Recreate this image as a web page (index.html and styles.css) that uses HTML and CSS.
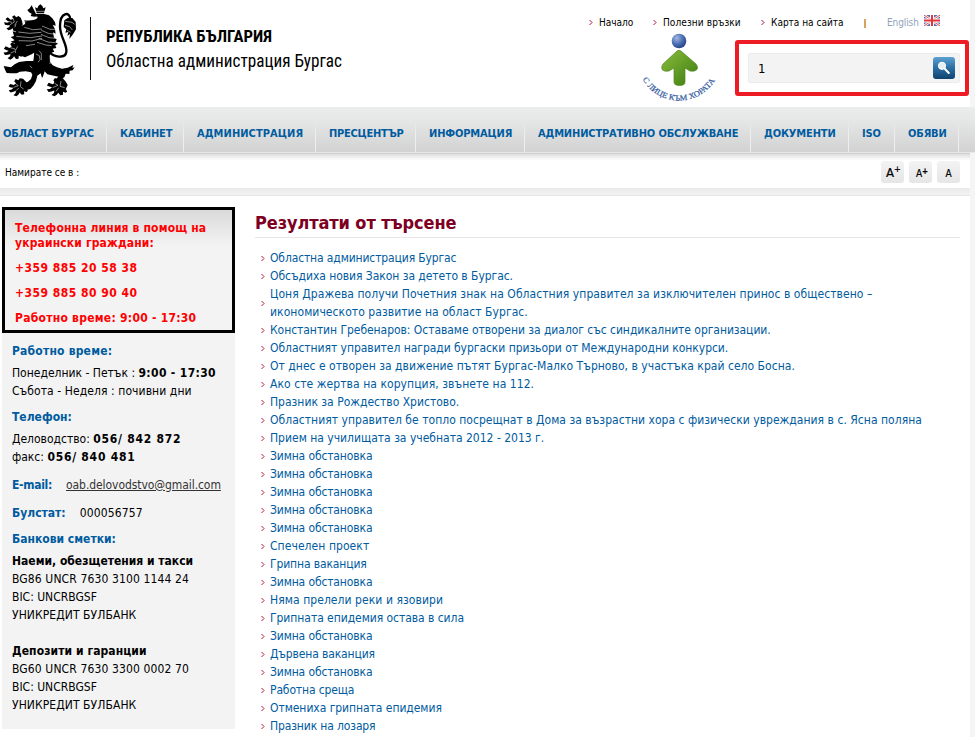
FILE: index.html
```html
<!DOCTYPE html>
<html>
<head>
<meta charset="utf-8">
<title>Областна администрация Бургас</title>
<link rel="stylesheet" href="styles.css">
</head>
<body>
<div class="page">
  <header class="header">
    <svg class="lion" viewBox="0 0 270 315" aria-hidden="true">
      <defs>
        <path id="paw" d="M28 0L24-10 17-21 8-25 2-20-5-25-11-19-7-12-14-8-25-14-31-7-25-3-17 0-24 4-33 4-29 12-20 12-12 10-14 17-22 22-14 27-6 23-2 18 3 26 11 26 12 17 19 21 24 18 21 11z"/>
      </defs>
      <!-- crown -->
      <path d="M105 22l7 3 3-7 6-5 6 5 3 7 7-3-5 18h-22z"/>
      <!-- head, mane and chest -->
      <path d="M108 42h25l14 4 10 9 8 12 2 10-9-2 7 12 2 14-8-4 3 16 8 5-4 9 8 4-8 5 3 8-11 2 5 9-9 3-42-4-14-9-21 0-15-5-21-2 9-6-18-7 12-4-12-10 10-3-4-14 10 3-1-12 10-7 9-1 8-4 6-11 20-2 9-3 5-7-8 1-14-3 3-7-8-4-5-7 7-5 6-9z"/>
      <!-- torso and hind legs -->
      <path d="M103 135l56 0-6 24-4 8 1 18 8 11 13 6 15 4 17-3 17-8-3 9 7-2-6 9-9 1-1 10-11-1-4 11-9 5 9 14-3 10-24-2-4-11 3-8 10-10-20-4-13-3-8-9-5 15-3 5-4-14-10 7-4 16-8 14-9 10-14 4-14-6-3-10 14-6 10-4 9-8 4-13-4-7-16-3-17 1-10 5-16 0-14-1-5-10-4-11 22 4 11-9 13-7 23-3 20 0 2-16z"/>
      <!-- forelegs -->
      <path d="M52 138l26 4 27-6 10 14-20 13-20 9-18-7zM44 69l15 18 17-3 4 14-21 2-12-14z"/>
      <use href="#paw" transform="translate(43 69) rotate(12) scale(.92)"/>
      <use href="#paw" transform="translate(43 151) rotate(-4)"/>
      <use href="#paw" transform="translate(57 260) rotate(-12) scale(.98)"/>
      <use href="#paw" transform="translate(174 259) rotate(-8) scale(1.05)"/>
      <!-- tail -->
      <path d="M150 157c10 14 46 20 49-1 3-24-19-44-19-78 0-42 30-45 31-20" fill="none" stroke="#000" stroke-width="7"/>
      <path d="M203 54h14l10 12 1 22-9 15-11 14 2-15-8 6 3-12-9 2 3-10-8-7 2-20z"/>
      <path class="cut" d="M106 34h30M102 52l8-3M73 82l25 7 28-2M55 96l34 4 35-3M49 109l42 4 35-5M56 122l40 1 30-8M126 78l24 10 15 0M124 91l21 9 22 3M123 103l24 10 21 2M116 115l28 11 22 2M111 127l26 8 18 2M78 137l27-4M108 162l10 5 2 12-6 8M117 152l7 8 0 20M152 176l-2 16M39 54l4 12-13 8M52 63l-8 13M24 64l12 3M44 82l4-9M31 143l14 4 2 12M32 159l12-5M53 139l-6 11M45 250l10 7-14 5M63 244l-2 16 10 7M48 272l8-8M164 250l10 6-16 7M183 243l-3 16 14 4M168 274l8-11M191 199l-4 8M90 197l6 8M195 76l14 4 8 10M196 64l20 3 8 6M201 91l11 6"/>
      <path d="M100 70q-15-7-26-8M75 62q1 15 22 14" fill="none" stroke="#000" stroke-width="2.500"/>
    </svg>
    <div class="divider"></div>
    <svg class="brand" viewBox="0 0 240 60" lang="bg">
      <text class="brand-top" x="0" y="22" textLength="166" lengthAdjust="spacingAndGlyphs">РЕПУБЛИКА БЪЛГАРИЯ</text>
      <text class="brand-sub" x="0" y="47" textLength="236" lengthAdjust="spacingAndGlyphs">Областна администрация Бургас</text>
    </svg>
    <svg class="motto" viewBox="0 0 86 76">
      <defs>
        <linearGradient id="leaf" x1="0" y1="0" x2="1" y2="1"><stop offset="0" stop-color="#8abb3c"/><stop offset=".5" stop-color="#639d26"/><stop offset="1" stop-color="#3c7810"/></linearGradient>
        <radialGradient id="ball" cx=".35" cy=".3" r=".75"><stop offset="0" stop-color="#a0b9e2"/><stop offset=".55" stop-color="#4d6fb3"/><stop offset="1" stop-color="#243f86"/></radialGradient>
        <path id="arc" d="M6 48.500A42 42 0 0 0 80 48.500"/>
      </defs>
      <circle cx="43" cy="11" r="7.300" fill="url(#ball)"/>
      <path d="M41 21q2-1.500 4 0L60 34q2.500 3 1 5.500-2 2.500-7 1.500l-5-3v14q0 3.500-5.500 3.500T38 52V38l-5 3q-5 1-7-1.500-1-2.500 1-5.500z" fill="url(#leaf)" stroke="#4f8720" stroke-width=".7" stroke-linejoin="round"/>
      <text class="motto-text"><textPath href="#arc" startOffset="1" textLength="87" lengthAdjust="spacingAndGlyphs">С ЛИЦЕ КЪМ ХОРАТА</textPath></text>
    </svg>
    <div class="tools">
      <nav class="links">
        <a class="home"><svg class="chev" viewBox="0 0 4 5"><path d="M.5 0L3 2.500.5 5"/></svg>Начало</a>
        <a class="useful"><svg class="chev" viewBox="0 0 4 5"><path d="M.5 0L3 2.500.5 5"/></svg>Полезни връзки</a>
        <a class="map"><svg class="chev" viewBox="0 0 4 5"><path d="M.5 0L3 2.500.5 5"/></svg>Карта на сайта</a>
        <span class="bar"></span>
        <a class="english">English</a>
        <svg class="flag" viewBox="0 0 16 11"><path fill="#5b6fae" d="M0 0h16v11H0z"/><path d="M0 0l16 11M16 0L0 11" stroke="#fff" stroke-width="2.400"/><path d="M0 0l16 11M16 0L0 11" stroke="#e0484e" stroke-width="1"/><path d="M8 0v11M0 5.500h16" stroke="#fff" stroke-width="4"/><path d="M8 0v11M0 5.500h16" stroke="#e5343b" stroke-width="2"/></svg>
      </nav>
      <div class="search-frame">
        <div class="search">
          <span>1</span>
          <svg class="search-btn" viewBox="0 0 22 22"><defs><linearGradient id="sb" x1="0" y1="0" x2="0" y2="1"><stop offset="0" stop-color="#5da1d2"/><stop offset=".5" stop-color="#2c6da3"/><stop offset="1" stop-color="#0d426f"/></linearGradient></defs><rect width="22" height="22" rx="3" fill="url(#sb)"/><circle cx="9" cy="8.800" r="3.600" fill="#e4eef6" stroke="#fff"/><path d="M11.500 11.500l4.300 4.500" stroke="#fff" stroke-width="2" stroke-linecap="round"/></svg>
        </div>
      </div>
    </div>
  </header>
  <nav class="menu">
    <a>ОБЛАСТ БУРГАС</a><a>КАБИНЕТ</a><a>АДМИНИСТРАЦИЯ</a><a>ПРЕСЦЕНТЪР</a><a>ИНФОРМАЦИЯ</a><a>АДМИНИСТРАТИВНО ОБСЛУЖВАНЕ</a><a>ДОКУМЕНТИ</a><a>ISO</a><a>ОБЯВИ</a>
  </nav>
  <div class="crumbs">
    <span>Намирате се в :</span>
    <div class="sizes">
      <b class="large">A<sup>+</sup></b><b class="mid">A<sup>+</sup></b><b class="small">A</b>
    </div>
  </div>
  <div class="strip"></div>
  <div class="columns">
    <aside class="side">
      <div class="hotline">
        <p>Телефонна линия в помощ на<br>украински граждани:</p>
        <p class="phone">+359 885 20 58 38</p>
        <p class="phone">+359 885 80 90 40</p>
        <p class="hours">Работно време: 9:00 - 17:30</p>
      </div>
      <div class="contacts">
        <h3 class="roomy">Работно време:</h3>
        <p>Понеделник - Петък : <b class="time">9:00 - 17:30</b><br><span class="rest">Събота - Неделя : почивни дни</span></p>
        <h3>Телефон:</h3>
        <p>Деловодство: <b class="num">056/ 842 872</b><br>факс: <b class="num">056/ 840 481</b></p>
        <div class="pair"><h3 class="mail">E-mail:</h3><a>oab.delovodstvo@gmail.com</a></div>
        <div class="pair tax"><h3>Булстат:</h3><span class="code">000056757</span></div>
        <h3>Банкови сметки:</h3>
        <p><b>Наеми, обезщетения и такси</b><br><span class="code">BG86 UNCR 7630 3100 1144 24</span><br>BIC: UNCRBGSF<br><span class="rest">УНИКРЕДИТ БУЛБАНК</span></p>
        <p class="second"><b class="rest">Депозити и гаранции</b><br><span class="code">BG60 UNCR 7630 3300 0002 70</span><br>BIC: UNCRBGSF<br><span class="rest">УНИКРЕДИТ БУЛБАНК</span></p>
      </div>
    </aside>
    <main class="main">
      <h1>Резултати от търсене</h1>
      <ul class="results">
        <li class="tight">Областна администрация Бургас</li>
        <li class="snug">Обсъдиха новия Закон за детето в Бургас.</li>
        <li class="wide">Цоня Дражева получи Почетния знак на Областния управител за изключителен принос в обществено –<br>икономическото развитие на област Бургас.</li>
        <li class="snug">Константин Гребенаров: Оставаме отворени за диалог със синдикалните организации.</li>
        <li class="snug">Областният управител награди бургаски призьори от Международни конкурси.</li>
        <li class="loose">От днес е отворен за движение пътят Бургас-Малко Търново, в участъка край село Босна.</li>
        <li class="wide">Ако сте жертва на корупция, звънете на 112.</li>
        <li>Празник за Рождество Христово.</li>
        <li class="loose">Областният управител бе топло посрещнат в Дома за възрастни хора с физически увреждания в с. Ясна поляна</li>
        <li>Прием на училищата за учебната 2012 - 2013 г.</li>
        <li class="tight">Зимна обстановка</li>
        <li class="tight">Зимна обстановка</li>
        <li class="tight">Зимна обстановка</li>
        <li class="tight">Зимна обстановка</li>
        <li class="tight">Зимна обстановка</li>
        <li class="wide">Спечелен проект</li>
        <li class="tight">Грипна ваканция</li>
        <li class="tight">Зимна обстановка</li>
        <li class="wide">Няма прелели реки и язовири</li>
        <li class="snug">Грипната епидемия остава в сила</li>
        <li class="tight">Зимна обстановка</li>
        <li class="tight">Дървена ваканция</li>
        <li class="tight">Зимна обстановка</li>
        <li class="tight">Работна среща</li>
        <li class="snug">Отмениха грипната епидемия</li>
        <li class="tight">Празник на лозаря</li>
      </ul>
    </main>
  </div>
</div>
</body>
</html>
```
FILE: styles.css
```css
* { box-sizing: border-box; }
body {
  margin: 0;
  height: 737px;
  overflow: hidden;
  background: #f5f5f5;
  color: #000;
  font: 12px/18px Tahoma, "DejaVu Sans Condensed", "DejaVu Sans", sans-serif;
}
h1, h3, p, ul { margin: 0; padding: 0; }
.page { width: 970px; height: 737px; background: #fff; }

.header { display: flex; height: 107px; }
.lion { flex: none; width: 90px; height: 105px; }
.cut { fill: none; stroke: #ddd; stroke-width: 1.8; }
.divider { flex: none; width: 1px; height: 63px; margin-top: 17px; background: #111; }
.brand { flex: none; width: 240px; height: 60px; margin: 20px 0 0 15px; overflow: visible; }
.brand text { font-family: "Roboto Condensed", "Liberation Sans Narrow", Roboto, sans-serif; }
.brand-top { font-size: 17px; font-weight: 700; }
.brand-sub { font-size: 17.5px; }
.motto { flex: none; width: 86px; height: 76px; margin: 30px 0 0 290px; overflow: visible; }
.motto-text { font: 8px "Liberation Serif", serif; fill: #2f58a0; stroke: #2f58a0; stroke-width: .2; }
.tools { flex: none; width: 234px; margin-left: 13px; }
.links { display: flex; align-items: center; height: 14px; margin: 16px 0 0 -146px; font-size: 10px; line-height: 14px; white-space: nowrap; }
.links a { display: block; flex: none; }
.chev { width: 4px; height: 5px; margin-right: 6px; vertical-align: 1px; fill: none; stroke: #a8123a; }
.home { width: 64px; }
.useful { width: 108px; letter-spacing: .1px; }
.map { width: 103px; }
.bar { flex: none; width: 2px; height: 9px; background: #d9a35f; margin-right: 21px; }
.links .english { width: 37px; color: #8fa3bb; letter-spacing: -.1px; }
.flag { flex: none; width: 16px; height: 11px; margin-bottom: 5px; }
.search-frame { width: 234px; height: 56px; margin-top: 10px; padding: 9px; border: 4px solid #ed1c24; border-radius: 3px; }
.search { display: flex; align-items: center; justify-content: space-between; width: 212px; height: 30px; padding: 0 4px 0 9px; background: #f3f3f3; border: 1px solid #eceeee; border-radius: 2px; font-size: 13px; }
.search span { padding-top: 2px; }
.search-btn { width: 22px; height: 22px; }

.menu {
  display: flex;
  width: 975px;
  height: 53px;
  background:
    linear-gradient(#e8e8e8, #e8e8e8) 0 45px / 100% 1px no-repeat,
    linear-gradient(#cfcfcf, #cfcfcf) 0 46px / 970px 1px no-repeat,
    linear-gradient(#dedede, #fdfdfd) 0 47px / 970px 6px no-repeat,
    linear-gradient(#ebecec 0, #e6e7e7 12px, #d2d2d2 45px) 0 0 / 100% 46px no-repeat;
}
.menu a {
  flex: none;
  height: 45px;
  padding: 18px 0 0 13px;
  background: linear-gradient(rgba(240,240,240,0), #eee 15px) right 12px / 1px 100% no-repeat;
  color: #005b9f;
  font-size: 11px;
  font-weight: 700;
  letter-spacing: -.15px;
  white-space: nowrap;
}
.menu a:nth-child(1) { width: 107px; padding-left: 3px; }
.menu a:nth-child(2) { width: 77px; }
.menu a:nth-child(3) { width: 132px; letter-spacing: .07px; }
.menu a:nth-child(4) { width: 100px; letter-spacing: -.25px; }
.menu a:nth-child(5) { width: 109px; }
.menu a:nth-child(6) { width: 226px; }
.menu a:nth-child(7) { width: 98px; }
.menu a:nth-child(8) { width: 46px; }
.menu a:nth-child(9) { width: 64px; }

.crumbs { display: flex; justify-content: space-between; height: 28px; padding: 1px 10px 0 5px; font-size: 10px; line-height: 24px; }
.sizes { display: flex; gap: 5px; }
.sizes b { display: flex; justify-content: center; align-items: center; width: 23px; height: 22px; padding-top: 2px; border-radius: 3px; background: linear-gradient(#f3f3f3, #e6e6e6); font-weight: 400; -webkit-text-stroke: .2px #000; }
.sizes sup { font-size: 9px; line-height: 9px; margin-bottom: 8px; }
.sizes .large { padding-left: 2px; font-size: 13px; }
.sizes .mid { padding: 3px 0 0 3px; font-size: 10px; }
.sizes .mid sup { margin-bottom: 5px; font-size: 8px; font-weight: 700; }
.sizes .small { padding-top: 4px; font-size: 10px; }
.strip { height: 8px; border-bottom: 1px solid #e6e6e6; background: linear-gradient(#eaeaea, #f3f3f3); }

.columns { display: flex; padding-top: 11px; }
.side { flex: none; width: 233px; height: 522px; margin-left: 2px; background: #f3f3f3; white-space: nowrap; }
.hotline { height: 126px; padding: 11px 10px 0; border: 3px solid #000; background: linear-gradient(#dadada, #f3f3f3 36px); color: #f00; font-weight: 700; line-height: 15px; letter-spacing: .15px; }
.hotline p { margin-bottom: 10px; }
.hotline .phone { letter-spacing: .48px; }
.hotline .hours { letter-spacing: .26px; }
.contacts { padding: 9px 10px 0; }
.contacts h3 { margin-bottom: 4px; color: #005b9f; font-size: 12px; line-height: 18px; }
.contacts p { margin-bottom: 8px; }
.contacts .roomy { letter-spacing: .2px; }
.contacts .mail { letter-spacing: -.3px; }
.time { letter-spacing: .35px; }
.num { letter-spacing: .75px; }
.code { letter-spacing: .13px; }
.rest { letter-spacing: .08px; }
.pair { display: flex; margin: 10px 0; }
.pair.tax { margin-bottom: 8px; }
.pair h3 { margin: 0 14px 0 0; }
.pair a { color: #333; text-decoration: underline; letter-spacing: -.07px; }
.contacts .second { margin-top: 18px; }

.main { flex: none; width: 705px; margin-left: 20px; }
h1 { height: 31px; padding-top: 5px; border-bottom: 1px solid #e6e6e6; color: #7d0022; font-size: 18px; line-height: 22px; letter-spacing: -.1px; }
.results { margin-top: 11px; list-style: none; white-space: nowrap; color: #005b9f; }
.results li {
  padding-left: 15px;
  background: url("data:image/svg+xml,%3Csvg xmlns='http://www.w3.org/2000/svg' width='4' height='5'%3E%3Cpath d='M.5 0L3 2.5.5 5' fill='none' stroke='%23b5133c'/%3E%3C/svg%3E") 6px 50% no-repeat;
}
.tight { letter-spacing: -.13px; }
.snug { letter-spacing: -.05px; }
.loose { letter-spacing: .03px; }
.wide { letter-spacing: .065px; }
```
